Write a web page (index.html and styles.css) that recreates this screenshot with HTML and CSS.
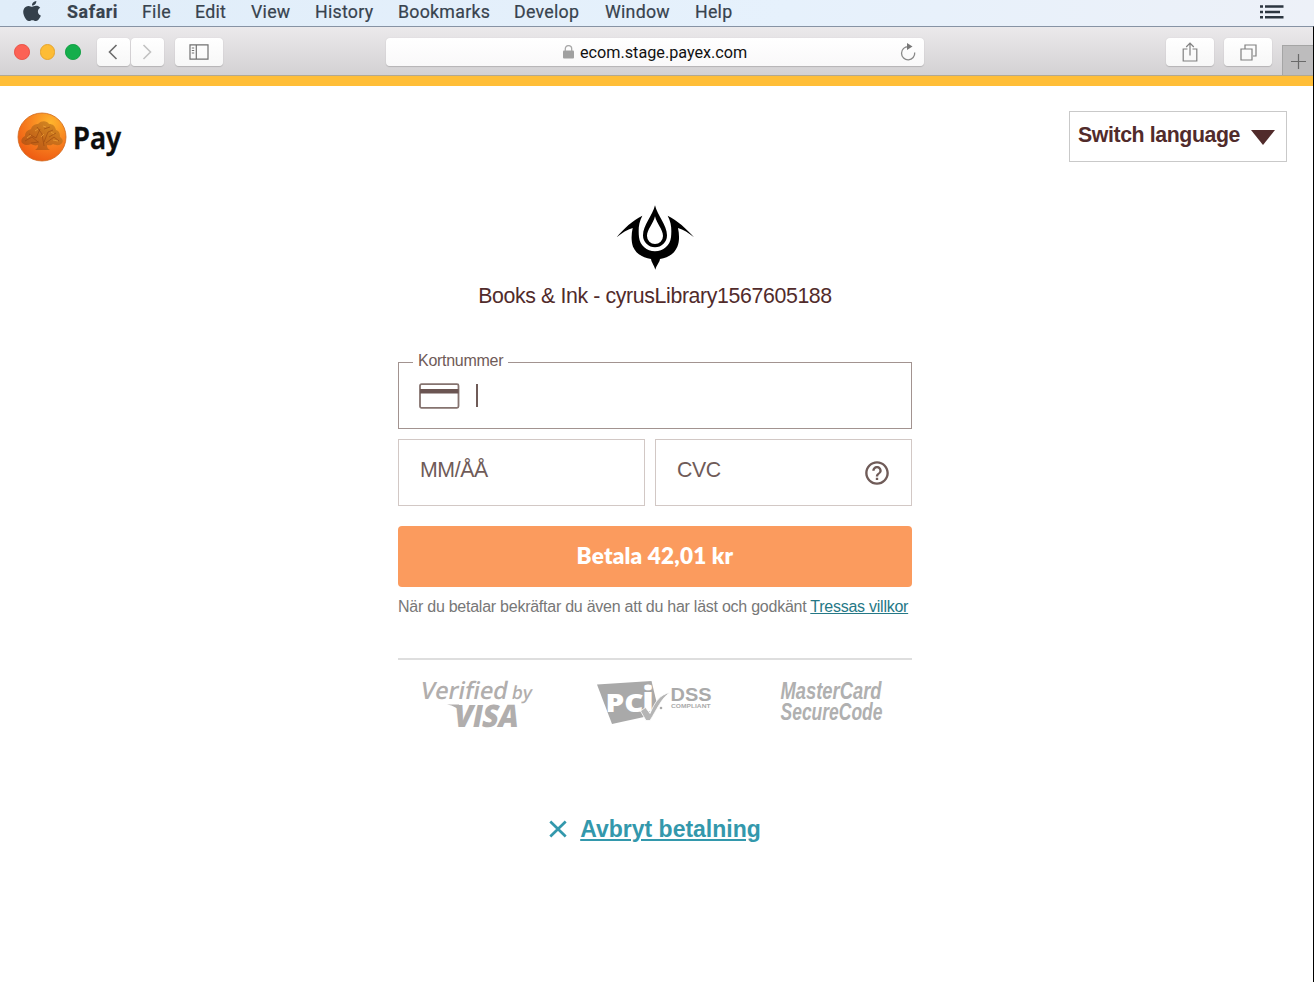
FILE: index.html
```html
<!DOCTYPE html>
<html lang="sv">
<head>
<meta charset="utf-8">
<title>Payment</title>
<link rel="stylesheet" href="styles.css">
</head>
<body>
<nav class="menubar">
  <svg class="apple" viewBox="2 0 20 24" preserveAspectRatio="none"><path fill="#34404b" d="M12.152 6.896c-.948 0-2.415-1.078-3.96-1.04-2.04.027-3.91 1.183-4.961 3.014-2.117 3.675-.546 9.103 1.519 12.09 1.013 1.454 2.208 3.09 3.792 3.039 1.52-.065 2.09-.987 3.935-.987 1.831 0 2.35.987 3.96.948 1.637-.026 2.676-1.48 3.676-2.948 1.156-1.688 1.636-3.325 1.662-3.415-.039-.013-3.182-1.221-3.22-4.857-.026-3.04 2.48-4.494 2.597-4.559-1.429-2.09-3.623-2.324-4.39-2.376-2-.156-3.675 1.09-4.61 1.09zM15.53 3.83c.843-1.012 1.4-2.427 1.245-3.83-1.207.052-2.662.805-3.532 1.818-.78.896-1.454 2.338-1.273 3.714 1.338.104 2.715-.688 3.559-1.701"/></svg>
  <div class="menus">
    <b>Safari</b><span>File</span><span>Edit</span><span>View</span><span>History</span><span>Bookmarks</span><span>Develop</span><span>Window</span><span>Help</span>
  </div>
  <svg class="list" viewBox="0 0 24 14"><path d="M0 1.500h3M5 1.500h18.500M0 7h3M5 7h15M0 12.300h3M5 12.300h18.500" stroke="#2c3640" stroke-width="2.600"/></svg>
</nav>
<div class="window">
  <header class="toolbar">
    <div class="lights"><i class="red"></i><i class="yellow"></i><i class="green"></i></div>
    <div class="history">
      <span class="btn"><svg width="12" height="18" viewBox="0 0 12 18"><path d="M9.500 2L2.500 9l7 7" fill="none" stroke="#6c6c6c" stroke-width="1.600"/></svg></span>
      <span class="btn"><svg width="12" height="18" viewBox="0 0 12 18"><path d="M2.500 2l7 7-7 7" fill="none" stroke="#c2c2c2" stroke-width="1.600"/></svg></span>
    </div>
    <span class="btn wide"><svg width="20" height="16" viewBox="0 0 20 16"><path d="M1 .8h18v14.400H1zM7.300 1v14M2.800 4h2.400M2.800 6.500h2.400M2.800 9h2.400" fill="none" stroke="#707070" stroke-width="1.200"/></svg></span>
    <div class="address">
      <svg class="lock" width="11" height="14" viewBox="0 0 11 14"><rect y="5.500" width="11" height="8" rx="1" fill="#a0a0a0"/><path d="M2.300 6V3.800a3.200 3.200 0 0 1 6.400 0V6" fill="none" stroke="#a8a8a8" stroke-width="1.300"/></svg>
      <span class="host">ecom.stage.payex.com</span>
      <svg class="reload" width="16" height="18" viewBox="0 0 16 18"><path d="M8.500 3.600A6.600 6.600 0 1 0 14.700 9.500" fill="none" stroke="#888" stroke-width="1.300"/><path d="M7 0l5.500 3.500L7 7z" fill="#777"/></svg>
    </div>
    <div class="tools">
      <span class="btn wide"><svg width="16" height="20" viewBox="0 0 16 20"><path d="M5.500 7H1.200v12h13.600V7h-4.300M8 13.500V1.500M4.200 5L8 1.200 11.800 5" fill="none" stroke="#808080" stroke-width="1.200"/></svg></span>
      <span class="btn wide"><svg width="17" height="17" viewBox="0 0 17 17"><path d="M1 5h11v11H1zM5 4.500V1h11v11h-3" fill="none" stroke="#808080" stroke-width="1.200"/></svg></span>
    </div>
    <span class="newtab"><svg width="15" height="15" viewBox="0 0 15 15"><path d="M7.500 0v15M0 7.500h15" stroke="#6a6a6a" stroke-width="1.200"/></svg></span>
  </header>
  <div class="stripe"></div>
  <div class="brandbar">
    <svg class="brand" width="110" height="52" viewBox="0 0 110 52">
      <defs>
        <radialGradient id="coin" cx=".68" cy=".2" r=".85"><stop offset="0" stop-color="#ffb52c"/><stop offset=".5" stop-color="#f88420"/><stop offset="1" stop-color="#ee5a12"/></radialGradient>
        <linearGradient id="leaf" x1="0" x2="1" y1="1" y2="0"><stop offset="0" stop-color="#ad4c12"/><stop offset="1" stop-color="#cb8420"/></linearGradient>
      </defs>
      <circle cx="25" cy="26" r="24" fill="url(#coin)" stroke="#cf6a1e" stroke-width=".8"/>
      <g transform="translate(0 1)">
        <path d="M5 31c-2-3 1-6 3-7 0-5 4-6 6-7 1-4 5-5 7-5 4-4 9-3 11 0 4 0 6 2 7 6 4 1 4 5 4 7 3 2 4 5 1 7-2 2-6 1-8 0-2 2-4 1-6 1 0 3 1 4 3 5H18c2-1 3-3 3-5-3 1-5 0-7-1-3 2-7 1-9-1z" fill="url(#leaf)" opacity=".8"/>
        <path d="M8 29l7-4 6 5M12 22l7 4 4-9M20 15l5 7 2 12M27 30l4-10 5-2M29 31l8-6 5 4M27 17l6-2M14 31l8-1M32 25l7-4" fill="none" stroke="#96440e" stroke-width=".9" opacity=".65"/>
        <path d="M10 26l4-3M18 19l3-2M26 14l3 1M34 20l3 2M24 25l3-3M36 28l5 1" stroke="#f3a53b" stroke-width="1" opacity=".7"/>
      </g>
      <text x="56" y="38" textLength="48" lengthAdjust="spacingAndGlyphs" class="pay">Pay</text>
    </svg>
    <button class="language"><span>Switch language</span><svg width="24" height="15" viewBox="0 0 24 15"><path d="M0 0h24L12 15z" fill="#512b2b"/></svg></button>
  </div>
  <main class="checkout">
    <svg class="crest" width="78" height="65" viewBox="48 28 234 195">
      <path fill-rule="evenodd" d="M165 29C172 60 201 88 201 119a36 36 0 0 1-72 0C129 88 158 60 165 29zM165 62C160 84 141 102 141 121a24 24 0 0 0 48 0C189 102 170 84 165 62z"/>
      <path d="M50 125C72 98 97 75 127 60C115 83 115 102 117 125C120 150 140 167 165 167S210 150 213 125C215 102 215 83 203 60C233 75 258 98 282 125C266 111 250 102 234 97C238 116 239 136 232 153C223 174 204 187 180 190C178 202 170 207 166 222C162 207 155 202 153 190C129 187 108 174 99 153C93 136 94 116 98 97C82 102 66 111 50 125z"/>
    </svg>
    <h1 class="merchant">Books &amp; Ink - cyrusLibrary1567605188</h1>
    <div class="field number">
      <label class="label">Kortnummer</label>
      <svg class="card" width="41" height="26" viewBox="0 0 41 26"><rect x="1" y="1.200" width="38.500" height="23.600" rx="1.500" fill="none" stroke="#85736f" stroke-width="1.800"/><path d="M1 8.300h38.500" stroke="#6b5552" stroke-width="4.600"/></svg>
      <i class="caret"></i>
    </div>
    <div class="pair">
      <div class="field expiry">MM/ÅÅ</div>
      <div class="field cvc"><span>CVC</span><svg class="help" width="26" height="26" viewBox="1 1 22 22"><path fill="#6f5b58" d="M11 18h2v-2h-2v2zm1-16C6.480 2 2 6.480 2 12s4.480 10 10 10 10-4.480 10-10S17.520 2 12 2zm0 18c-4.410 0-8-3.590-8-8s3.590-8 8-8 8 3.590 8 8-3.590 8-8 8zm0-14c-2.210 0-4 1.790-4 4h2c0-1.100.9-2 2-2s2 .9 2 2c0 2-3 1.750-3 5h2c0-2.250 3-2.500 3-5 0-2.210-1.790-4-4-4z"/></svg></div>
    </div>
    <button class="submit">Betala 42,01 kr</button>
    <p class="terms">När du betalar bekräftar du även att du har läst och godkänt <a>Tressas villkor</a></p>
    <div class="badges">
      <svg width="514" height="60" viewBox="398 670 514 60">
        <g class="visa">
          <text transform="translate(419.500 698.500) skewX(-11)" font-size="24" textLength="87" lengthAdjust="spacingAndGlyphs" class="semi">Verified</text>
          <text transform="translate(511 698.500) skewX(-11)" font-size="18" textLength="20" lengthAdjust="spacingAndGlyphs" class="semi">by</text>
          <text transform="translate(452 726.500) skewX(-11)" font-size="31" textLength="65" lengthAdjust="spacingAndGlyphs" class="heavy">VISA</text>
          <path d="M447 704.500h12l2 8c-2-4-8-7-14-8z"/>
        </g>
        <path d="M597 684.500L651.500 681 657 704 644 717 612 724z" fill="#a9a9a9"/>
        <text x="605.500" y="712" font-size="25" textLength="38" lengthAdjust="spacingAndGlyphs" class="pci">PC</text>
        <text x="642" y="711" font-size="33" textLength="12" lengthAdjust="spacingAndGlyphs" class="pci">i</text>
        <path d="M640.500 711l5-3.500 4.500 6c5-12 10-19 20-21-9 6-13 17-20 28h-4z" fill="#b5b5b5" stroke="#fff" stroke-width=".8"/>
        <circle cx="661" cy="708" r="1.300" fill="#aaa"/>
        <text x="670.500" y="701" font-size="17.500" textLength="41" lengthAdjust="spacingAndGlyphs" class="dss">DSS</text>
        <text x="671" y="707.500" font-size="6" textLength="39.500" lengthAdjust="spacingAndGlyphs" class="dss">COMPLIANT</text>
        <g class="mc">
          <text x="780.500" y="699" font-size="23" textLength="101" lengthAdjust="spacingAndGlyphs">MasterCard</text>
          <text x="780.500" y="719.500" font-size="23" textLength="102" lengthAdjust="spacingAndGlyphs">SecureCode</text>
        </g>
      </svg>
    </div>
    <a class="cancel"><svg width="18" height="18" viewBox="0 0 18 18"><path d="M1.300 1.500L16.700 16.500M16.700 1.500L1.300 16.500" stroke="#3398ac" stroke-width="2.700"/></svg><span>Avbryt betalning</span></a>
  </main>
</div>
</body>
</html>
```
FILE: styles.css
```css
* { box-sizing: border-box; }
body { margin: 0; height: 982px; overflow: hidden; display: flex; flex-direction: column; background: #fff; font-family: "Liberation Sans", Arial, sans-serif; }
button { font-family: inherit; cursor: pointer; }
.menubar { height: 26px; flex: none; display: flex; align-items: center; padding: 0 30px 2px 23px; background: linear-gradient(90deg, #e0edf9, #e6f1fc 60%, #edf1f8); font: 17.800px/24px Roboto, sans-serif; color: #38434e; }
.apple { width: 18px; height: 20px; margin-right: 26px; margin-top: -3px; }
.menus { display: grid; grid-template-columns: 51px 29px 32px 40px 59px 92px 67px 66px 38px; column-gap: 24px; white-space: nowrap; flex: 1; letter-spacing: 0.250px; -webkit-text-stroke: 0.2px; }
.menus b { letter-spacing: 0.600px; }
.list { width: 24px; height: 14px; }
.window { flex: 1; display: flex; flex-direction: column; border-top: 1px solid #8793a4; border-right: 1px solid #000; }
.toolbar { height: 49px; flex: none; display: flex; align-items: center; padding: 2px 0 0 14px; background: linear-gradient(#ebe9eb, #d3d1d3); border-bottom: 1px solid #b3a990; }
.lights { display: flex; gap: 10px; width: 82px; }
.lights i { width: 15.700px; height: 15.700px; border-radius: 50%; }
.red { background: #fc6255; border: 1px solid #ea5145; }
.yellow { background: #fdbc35; border: 1px solid #e5a42d; }
.green { background: #14ae4c; border: 1px solid #0d9f40; }
.history { display: flex; gap: 1px; margin-left: 0.5px; }
.btn { width: 33px; height: 28px; display: flex; align-items: center; justify-content: center; border-radius: 4px; background: linear-gradient(#fff, #f7f7f7); box-shadow: 0 1px 1px #b5b3b5, 0 0 1px #c5c3c5; }
.wide { width: 48px; }
.history + .wide { margin-left: 11.500px; }
.address { margin-left: 163px; width: 538px; height: 28px; display: flex; align-items: center; padding: 0 8px 0 177px; border-radius: 4px; background: linear-gradient(#fff, #f9f8f9); box-shadow: 0 1px 1px #b5b3b5, 0 0 1px #c5c3c5; font: 16.200px/28px Roboto, sans-serif; color: #111; }
.host { margin: 2px 0 0 6px; flex: 1; }
.tools { display: flex; gap: 10px; margin-left: 242px; }
.newtab { align-self: flex-end; margin-left: auto; width: 31px; height: 30px; padding-top: 2px; border: 1px solid #a5a5a5; border-width: 1px 0 0 1px; background: #bdbcbd; display: flex; align-items: center; justify-content: center; }
.stripe { height: 10px; flex: none; background: #ffbe38; }
.brandbar { display: flex; justify-content: space-between; align-items: flex-start; padding: 25px 26px 0 17px; height: 119px; flex: none; }
.pay { font: 600 30px "Noto Sans", "Open Sans", sans-serif; fill: #0c0c0c; stroke: #0c0c0c; stroke-width: .5px; }
.language { width: 218px; height: 51px; padding: 0 11px 3px 8px; display: flex; align-items: center; justify-content: space-between; border: 1px solid #c9c9c9; background: #fff; color: #512b2b; font-size: 21.300px; font-weight: bold; letter-spacing: -0.400px; white-space: nowrap; }
.language svg { margin-top: 5px; }
.checkout { width: 514px; margin-left: 398px; display: flex; flex-direction: column; }
.crest { align-self: center; }
.merchant { margin: 13px 0 0; line-height: 26px; font-size: 21.300px; letter-spacing: -0.370px; font-weight: normal; text-align: center; color: #512b2b; white-space: nowrap; }
.field { height: 67px; border: 1px solid #d2c8c5; color: #6f5b58; font-size: 21.300px; letter-spacing: -0.400px; display: flex; align-items: center; padding: 0 21px 4px; }
.number { position: relative; margin-top: 53px; border-color: #a29390; padding: 0 20px; }
.label { position: absolute; left: 14px; top: -12px; padding: 0 5px; line-height: 20px; font-size: 16px; letter-spacing: -0.280px; background: #fff; }
.caret { width: 1.500px; height: 23px; margin-left: 16px; background: #6f5b58; }
.pair { display: grid; grid-template-columns: 247px 257px; gap: 10px; margin-top: 10px; }
.cvc { justify-content: space-between; }
.help { margin-top: 4px; }
.submit { margin-top: 20px; height: 61px; border: 0; border-radius: 4px; background: #fb9b5e; color: #fff; font: 800 22.500px/60px "Lato", sans-serif; letter-spacing: 0.200px; padding: 0 0 1px; }
.terms { margin: 10px 0 0; line-height: 20px; font-size: 16px; letter-spacing: -0.250px; color: #777; white-space: nowrap; }
.terms a { color: #257886; text-decoration: underline; }
.badges { margin-top: 41px; padding-top: 10px; border-top: 2px solid #dedede; height: 72px; }
.badges svg { display: block; overflow: visible; }
.visa { font-family: "Open Sans", "Noto Sans", sans-serif; fill: #b1aead; }
.semi { font-weight: 600; }
.heavy { font-weight: 800; }
.pci { font-family: "Open Sans", sans-serif; font-weight: 800; fill: #fff; }
.dss { font-family: "Liberation Sans", Arial, sans-serif; font-weight: bold; fill: #aaa; }
.mc { font-family: "Liberation Sans", Arial, sans-serif; font-style: italic; font-weight: 700; fill: #b0b0b0; }
.cancel { align-self: center; display: flex; align-items: center; gap: 13px; margin-top: 85px; line-height: 28px; color: #3398ac; font-size: 23px; font-weight: bold; }
.cancel span { text-decoration: underline; }
```
